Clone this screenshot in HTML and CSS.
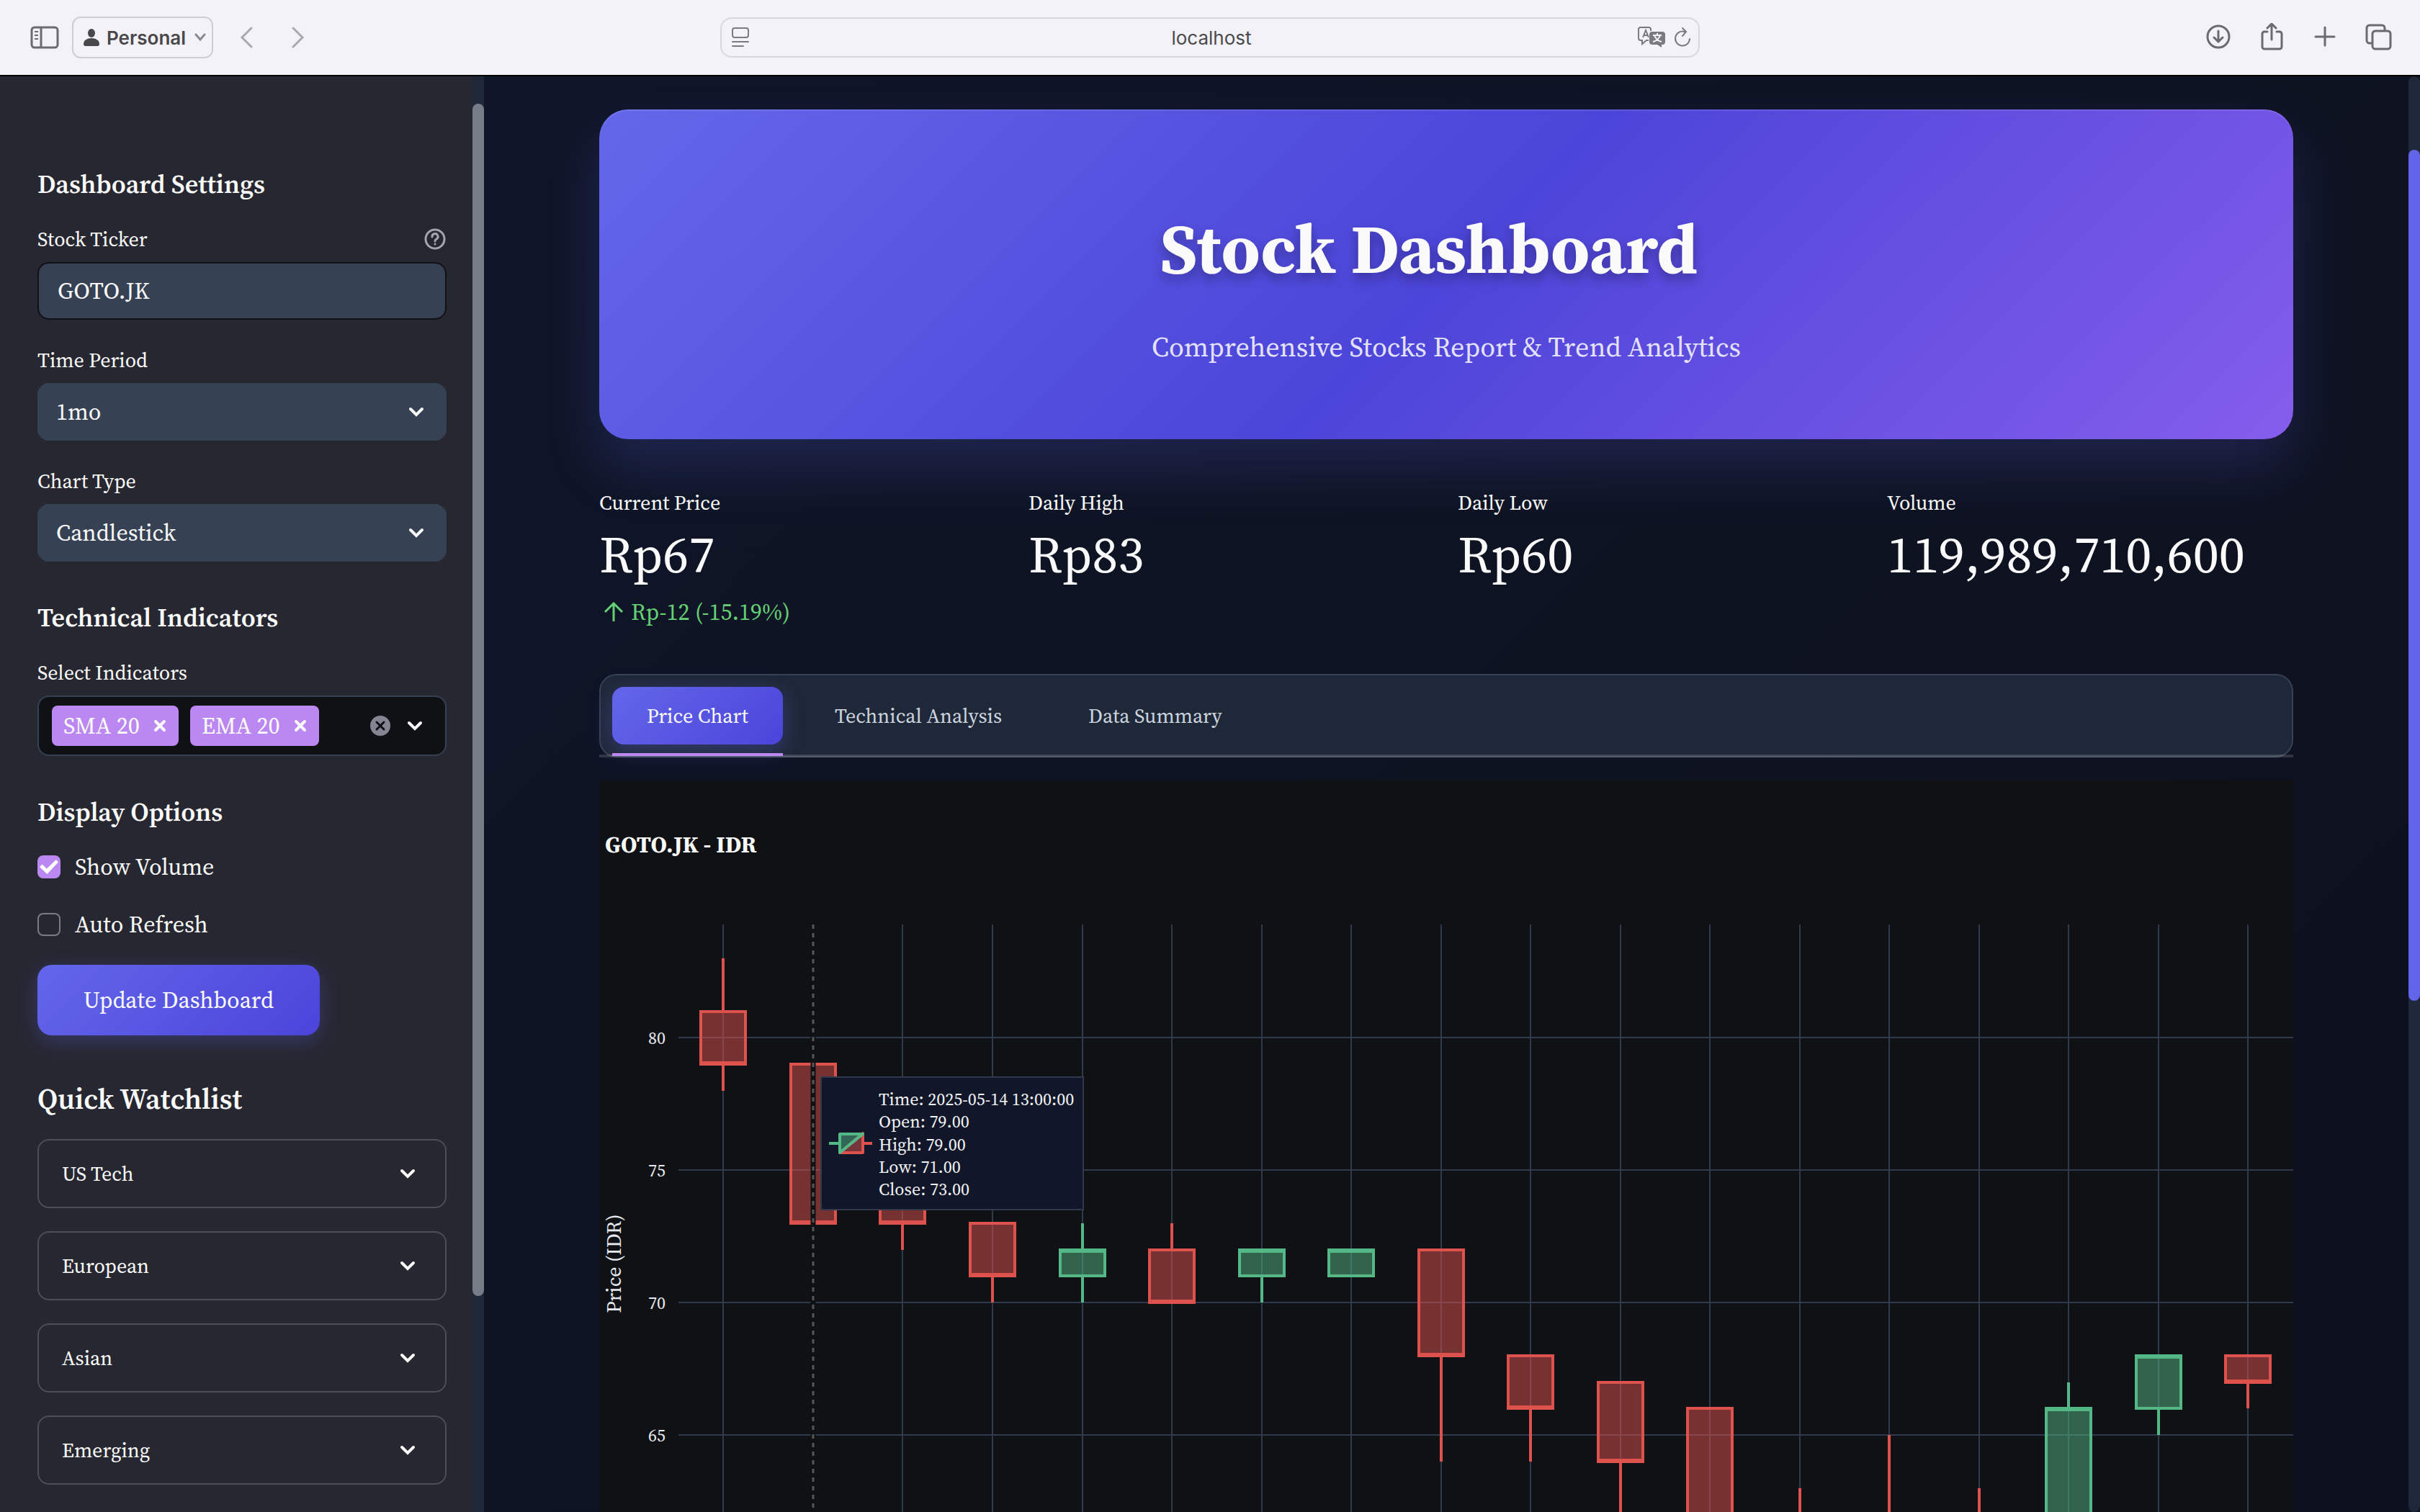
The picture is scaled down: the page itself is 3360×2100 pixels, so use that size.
FILE: index.html
```html
<!DOCTYPE html>
<html lang="en">
<head>
<meta charset="utf-8">
<title>Stock Dashboard</title>
<link rel="stylesheet" href="styles.css">
</head>
<body>
<svg class="defs" aria-hidden="true">
  <symbol id="chevron" viewBox="0 0 24 24"><path d="M4 8l8 8 8-8" fill="none" stroke="currentColor" stroke-width="4" stroke-linecap="round"/></symbol>
  <symbol id="cross" viewBox="0 0 24 24"><path d="M6 6l12 12M18 6L6 18" fill="none" stroke="currentColor" stroke-width="4" stroke-linecap="round"/></symbol>
</svg>
<div class="app">
  <header class="toolbar">
    <div class="toolbar-left">
      <button class="icon-button" aria-label="Show sidebar">
        <svg width="40" height="32" viewBox="0 0 40 32" fill="none" stroke="currentColor" stroke-width="3"><rect x="2" y="2" width="36" height="28" rx="4"/><path d="M15 2v28"/><path d="M6 8h5M6 13h5M6 18h5" stroke-width="2"/></svg>
      </button>
      <button class="profile">
        <svg width="22" height="24" viewBox="0 0 22 24" fill="currentColor"><ellipse cx="11" cy="6" rx="5" ry="6"/><path d="M0 21c0-5 5-8 11-8s11 3 11 8c0 2-1 3-3 3H3c-2 0-3-1-3-3z"/></svg>
        <span>Personal</span>
        <svg class="profile-arrow" width="16" height="12" viewBox="0 0 16 12" fill="none" stroke="currentColor" stroke-width="3" stroke-linecap="round"><path d="M2 2l6 7 6-7"/></svg>
      </button>
      <nav class="history">
        <button class="icon-button" aria-label="Back"><svg width="20" height="32" viewBox="0 0 20 32" fill="none" stroke="currentColor" stroke-width="3" stroke-linecap="round"><path d="M17 3L4 16l13 13"/></svg></button>
        <button class="icon-button" aria-label="Forward"><svg width="20" height="32" viewBox="0 0 20 32" fill="none" stroke="currentColor" stroke-width="3" stroke-linecap="round"><path d="M3 3l13 13L3 29"/></svg></button>
      </nav>
    </div>
    <div class="address">
      <button class="icon-button" aria-label="Page menu"><svg width="24" height="28" viewBox="0 0 24 28" fill="none" stroke="currentColor" stroke-width="2" stroke-linecap="round"><rect x="1" y="1" width="22" height="13" rx="3"/><path d="M1 20h22M1 26h15"/></svg></button>
      <input class="address-input" type="text" value="localhost" aria-label="Address">
      <button class="icon-button" aria-label="Translate">
        <svg width="38" height="30" viewBox="0 0 38 30"><path d="M18 6V4a3 3 0 0 0-3-3H4a3 3 0 0 0-3 3v12a3 3 0 0 0 3 3h2v5l6-5h3" fill="none" stroke="currentColor" stroke-width="2"/><path d="M7 15l4-10 4 10M8 12h6" fill="none" stroke="currentColor" stroke-width="2"/><path d="M20 7h14a4 4 0 0 1 4 4v10a4 4 0 0 1-4 4h-1v4l-6-4h-7a4 4 0 0 1-4-4V11a4 4 0 0 1 4-4z" fill="currentColor"/><path d="M21 12h12M27 9v3M31 12c-1 4-5 8-10 9M23 12c1 4 5 8 10 9" fill="none" stroke="#f3f2f8" stroke-width="2"/></svg>
      </button>
      <button class="icon-button" aria-label="Reload"><svg width="24" height="30" viewBox="0 0 24 30" fill="none" stroke="currentColor" stroke-width="2" stroke-linecap="round"><path d="M22 17A10 10 0 1 1 15 7M12 2l5 5-5 6"/></svg></button>
    </div>
    <div class="toolbar-right">
      <button class="icon-button" aria-label="Downloads"><svg width="40" height="40" viewBox="0 0 40 40" fill="none" stroke="currentColor" stroke-width="3" stroke-linecap="round"><circle cx="20" cy="19" r="15"/><path d="M20 11v15M14 20l6 6 6-6"/></svg></button>
      <button class="icon-button" aria-label="Share"><svg width="40" height="40" viewBox="0 0 40 40" fill="none" stroke="currentColor" stroke-width="3" stroke-linecap="round"><path d="M14 12h-4a3 3 0 0 0-3 3v18a3 3 0 0 0 3 3h21a3 3 0 0 0 3-3V15a3 3 0 0 0-3-3h-4M20 23V2M14 7l6-6 6 6"/></svg></button>
      <button class="icon-button" aria-label="New tab"><svg width="40" height="40" viewBox="0 0 40 40" fill="none" stroke="currentColor" stroke-width="3" stroke-linecap="round"><path d="M20 6v25M7 19h26"/></svg></button>
      <button class="icon-button" aria-label="Tab overview"><svg width="40" height="40" viewBox="0 0 40 40" fill="none" stroke="currentColor" stroke-width="3"><rect x="12" y="11" width="25" height="25" rx="4"/><path d="M12 28H8a4 4 0 0 1-4-4V7a4 4 0 0 1 4-4h17a4 4 0 0 1 4 4v4"/></svg></button>
    </div>
  </header>

  <div class="workspace">
    <aside class="sidebar">
      <div class="sidebar-content">
        <h2 class="section-title">Dashboard Settings</h2>
        <div class="field">
          <div class="label-row">
            <label for="ticker">Stock Ticker</label>
            <svg class="help" width="32" height="32" viewBox="0 0 32 32" fill="none" stroke="currentColor" stroke-width="3" stroke-linecap="round"><circle cx="16" cy="16" r="13"/><path d="M12 13a4 4 0 1 1 6 3c-1 1-2 1-2 3M16 23v0"/></svg>
          </div>
          <input class="control ticker" id="ticker" type="text" value="GOTO.JK">
        </div>
        <div class="field">
          <label for="period">Time Period</label>
          <div class="select-wrap">
            <select class="control" id="period"><option>1mo</option></select>
            <svg class="chevron" width="24" height="24"><use href="#chevron"/></svg>
          </div>
        </div>
        <div class="field">
          <label for="chart-type">Chart Type</label>
          <div class="select-wrap">
            <select class="control" id="chart-type"><option>Candlestick</option></select>
            <svg class="chevron" width="24" height="24"><use href="#chevron"/></svg>
          </div>
        </div>

        <h2 class="section-title spaced">Technical Indicators</h2>
        <div class="field">
          <span class="label" id="indicators-label">Select Indicators</span>
          <div class="multiselect" role="group" aria-labelledby="indicators-label">
            <button class="tag">SMA 20 <svg width="24" height="24"><use href="#cross"/></svg></button>
            <button class="tag">EMA 20 <svg width="24" height="24"><use href="#cross"/></svg></button>
            <button class="icon-button clear" aria-label="Clear all"><svg width="28" height="28" viewBox="0 0 28 28"><circle cx="14" cy="14" r="14" fill="#838494"/><path d="M9 9l10 10M19 9L9 19" stroke="#101115" stroke-width="3" stroke-linecap="round"/></svg></button>
            <button class="icon-button" aria-label="Open list"><svg width="24" height="24"><use href="#chevron"/></svg></button>
          </div>
        </div>

        <h2 class="section-title spaced">Display Options</h2>
        <div class="checks">
          <label class="check"><input type="checkbox" checked>Show Volume</label>
          <label class="check"><input type="checkbox">Auto Refresh</label>
        </div>
        <button class="update">Update Dashboard</button>

        <h2 class="section-title watch-title">Quick Watchlist</h2>
        <div class="watchlist">
          <details><summary>US Tech <svg width="24" height="24"><use href="#chevron"/></svg></summary></details>
          <details><summary>European <svg width="24" height="24"><use href="#chevron"/></svg></summary></details>
          <details><summary>Asian <svg width="24" height="24"><use href="#chevron"/></svg></summary></details>
          <details><summary>Emerging <svg width="24" height="24"><use href="#chevron"/></svg></summary></details>
        </div>
      </div>
      <div class="scrollbar side-scroll"><span class="thumb"></span></div>
    </aside>

    <main class="main">
      <div class="content">
        <section class="hero">
          <h1>Stock Dashboard</h1>
          <p>Comprehensive Stocks Report &amp; Trend Analytics</p>
        </section>

        <section class="metrics">
          <div class="metric">
            <div class="metric-label">Current Price</div>
            <div class="metric-value">Rp67</div>
            <div class="metric-delta"><svg width="28" height="28" viewBox="0 0 28 28" fill="none" stroke="currentColor" stroke-width="3"><path d="M14 27V3M2 14L14 2l12 12"/></svg>Rp-12 (-15.19%)</div>
          </div>
          <div class="metric"><div class="metric-label">Daily High</div><div class="metric-value">Rp83</div></div>
          <div class="metric"><div class="metric-label">Daily Low</div><div class="metric-value">Rp60</div></div>
          <div class="metric"><div class="metric-label">Volume</div><div class="metric-value">119,989,710,600</div></div>
        </section>

        <div class="tabs" role="tablist">
          <button class="tab active" role="tab" aria-selected="true">Price Chart</button>
          <button class="tab" role="tab">Technical Analysis</button>
          <button class="tab" role="tab">Data Summary</button>
        </div>

        <svg class="chart" viewBox="0 0 2352 1016" role="img" aria-label="GOTO.JK candlestick chart">
          <text class="chart-title" x="8" y="100">GOTO.JK - IDR</text>
          <path class="grid" d="M110 357H2352M110 541H2352M110 725H2352M110 909H2352M172 200V1016M421 200V1016M546 200V1016M671 200V1016M795 200V1016M920 200V1016M1044 200V1016M1169 200V1016M1293 200V1016M1418 200V1016M1542 200V1016M1667 200V1016M1791 200V1016M1916 200V1016M2040 200V1016M2165 200V1016M2289 200V1016"/>
          <g class="axis">
            <text x="92" y="366">80</text>
            <text x="92" y="550">75</text>
            <text x="92" y="734">70</text>
            <text x="92" y="918">65</text>
          </g>
          <text class="axis-title" transform="translate(30 671) rotate(-90)">Price (IDR)</text>
          <g class="down">
            <path d="M141 321h62v73h-62zM141 392h62M172 247v74M172 394v37"/>
            <path d="M266 394h62v221h-62zM266 613h62"/>
            <path d="M390 541h62v74h-62zM390 613h62M421 615v37"/>
            <path d="M515 615h62v73h-62zM515 686h62M546 688v37"/>
            <path d="M764 652h62v73h-62zM764 723h62M795 615v37"/>
            <path d="M1138 652h62v147h-62zM1138 797h62M1169 799v147"/>
            <path d="M1262 799h62v73h-62zM1262 870h62M1293 872v74"/>
            <path d="M1387 836h62v110h-62zM1387 944h62M1418 946v90"/>
            <path d="M1511 872h62v221h-62z"/>
            <path d="M1667 983v60"/>
            <path d="M1791 909v120"/>
            <path d="M1916 983v60"/>
            <path d="M2258 799h62v37h-62zM2258 834h62M2289 836v36"/>
          </g>
          <g class="up">
            <path d="M640 652h62v36h-62zM640 654h62M671 615v37M671 688v37"/>
            <path d="M889 652h62v36h-62zM889 654h62M920 688v37"/>
            <path d="M1013 652h62v36h-62zM1013 654h62"/>
            <path d="M2009 872h62v221h-62zM2009 874h62M2040 836v36"/>
            <path d="M2134 799h62v73h-62zM2134 801h62M2165 872v37"/>
          </g>
          <path class="spike-gap" d="M297 200V1016"/>
          <path class="spike" d="M297 200V1016"/>
          <g class="tooltip">
            <rect x="308" y="412" width="364" height="184"/>
            <g class="legend-mark">
              <path class="mark-down" d="M334 517h32v-27zM366 504h13"/>
              <path class="mark-up" d="M334 517v-26h32zM319 504h15"/>
            </g>
            <text x="388" y="451">Time: 2025-05-14 13:00:00</text>
            <text x="388" y="482">Open: 79.00</text>
            <text x="388" y="514">High: 79.00</text>
            <text x="388" y="545">Low: 71.00</text>
            <text x="388" y="576">Close: 73.00</text>
          </g>
        </svg>
      </div>
      <div class="scrollbar main-scroll"><span class="thumb"></span></div>
    </main>
  </div>
</div>
</body>
</html>
```
FILE: styles.css
```css
* { box-sizing: border-box; }

body {
  margin: 0;
  background: #0e1117;
  color: #fafafa;
  font-family: "Source Serif 4", "Source Serif Pro", "Liberation Serif", serif;
}

button, input, select { font: inherit; color: inherit; }
button { border: 0; background: none; padding: 0; }
svg { display: block; flex: none; }
h1, h2, p { margin: 0; }
.defs { position: absolute; width: 0; height: 0; }

.app { display: flex; flex-direction: column; height: 100vh; overflow: hidden; }

/* Browser toolbar */
.toolbar {
  display: grid;
  grid-template-columns: 1fr 40.5% 1fr;
  align-items: center;
  flex: none;
  height: 106px;
  border-bottom: 2px solid #000;
  background: #f3f2f8;
  color: #6b6a70;
  font-family: Inter, sans-serif;
}
.icon-button { display: flex; align-items: center; justify-content: center; }
.toolbar-left { display: flex; align-items: center; gap: 18px; padding-left: 42px; }
.profile {
  display: flex;
  align-items: center;
  gap: 10px;
  height: 58px;
  padding: 0 8px 0 14px;
  border: 2px solid #cfced3;
  border-radius: 12px;
  color: #48484b;
  font-size: 26px;
  font-weight: 600;
}
.profile-arrow { margin-left: 2px; color: #8a8990; }
.history { display: flex; gap: 52px; margin-left: 18px; color: #a9a8ae; }
.address {
  display: flex;
  align-items: center;
  gap: 12px;
  height: 56px;
  padding: 0 10px 0 14px;
  border: 2px solid #d8d7dc;
  border-radius: 16px;
  color: #7b7a80;
}
.address-input {
  flex: 1;
  min-width: 0;
  padding: 0 0 0 50px;
  border: 0;
  background: none;
  color: #4a4a4d;
  font-size: 26px;
  text-align: center;
}
.toolbar-right { display: flex; justify-content: flex-end; gap: 34px; padding-right: 38px; }

/* Page */
.workspace { display: flex; flex: 1; min-height: 0; }
.scrollbar { display: flex; flex-direction: column; flex: none; width: 16px; background: #1f2838; }
.thumb { border-radius: 8px; }
.side-scroll::before { content: ""; flex: 38; }
.side-scroll .thumb { flex: 1656; background: #777d86; }
.side-scroll::after { content: ""; flex: 300; }
.main-scroll { border-radius: 8px; }
.main-scroll::before { content: ""; flex: 102; }
.main-scroll .thumb { flex: 1182; background: #6265ea; }
.main-scroll::after { content: ""; flex: 710; }

/* Sidebar */
.sidebar { display: flex; flex: none; width: 20%; background: #262730; }
.sidebar-content { flex: 1; min-width: 0; padding: 126px 36px 38px 52px; overflow: hidden; }
.section-title { margin-bottom: 34px; font-size: 36px; line-height: 48px; font-weight: 600; }
.section-title.spaced { margin-top: 54px; }
.field + .field { margin-top: 38px; }
.field label, .label { display: block; font-size: 28px; line-height: 36px; }
.field .label-row { display: flex; align-items: center; justify-content: space-between; }
.help { color: #a5a6ab; }
.control, .multiselect {
  display: block;
  width: 100%;
  height: 80px;
  margin-top: 14px;
  padding: 0 24px;
  border: 2px solid #364153;
  border-radius: 16px;
  background: #364153;
  font-size: 32px;
}
.ticker { padding: 0 26px; border-color: #101115; }
.select-wrap { position: relative; }
select.control { appearance: none; }
.chevron { position: absolute; right: 30px; top: 28px; pointer-events: none; }
.multiselect {
  display: flex;
  align-items: center;
  gap: 16px;
  height: 84px;
  padding: 0 30px 0 18px;
  background: #101115;
}
.tag {
  display: flex;
  align-items: center;
  gap: 16px;
  height: 56px;
  padding: 0 14px 0 16px;
  border-radius: 8px;
  background: #bb87f0;
}
.clear { margin-left: auto; margin-right: 6px; }
.checks { display: grid; gap: 36px; margin-top: -4px; margin-bottom: 34px; }
.check { display: flex; align-items: center; gap: 20px; font-size: 32px; line-height: 44px; }
.check input {
  appearance: none;
  display: grid;
  place-items: center;
  width: 32px;
  height: 32px;
  margin: 0;
  border: 2px solid #7b7c82;
  border-radius: 8px;
}
.check input:checked { border-color: #bb87f0; background: #bb87f0; }
.check input:checked::before {
  content: "";
  width: 26px;
  height: 20px;
  background: #fff;
  clip-path: polygon(0 50%, 14% 32%, 38% 62%, 88% 0, 100% 18%, 40% 100%);
}
.update {
  width: 392px;
  max-width: 100%;
  height: 98px;
  border-radius: 20px;
  background: linear-gradient(135deg, #6366ea, #4c44da);
  box-shadow: 0 8px 30px rgba(99, 102, 241, 0.3);
  font-size: 32px;
}
.watch-title { margin: 64px 0 32px; font-size: 40px; }
.watchlist { display: grid; gap: 32px; }
.watchlist details { border: 2px solid #4d4e56; border-radius: 16px; }
.watchlist summary {
  display: flex;
  align-items: center;
  justify-content: space-between;
  height: 92px;
  padding: 0 40px 0 32px;
  font-size: 28px;
  list-style: none;
}

/* Main column */
.main {
  display: flex;
  flex: 1;
  min-width: 0;
  background: linear-gradient(135deg, #0f1628, #0e1322 50%, #0d101e);
}
.content { flex: 1; min-width: 0; padding: 46px 160px 0; overflow: hidden; }
.hero {
  padding: 134px 48px 104px;
  border-radius: 40px;
  background: linear-gradient(135deg, #6467ea, #4c45d9 50%, #855dec);
  box-shadow: 0 40px 80px rgba(99, 102, 241, 0.2), inset 0 2px 0 rgba(255, 255, 255, 0.1);
  text-align: center;
}
.hero h1 {
  padding-right: 48px;
  font-size: 96px;
  line-height: 120px;
  text-shadow: 0 8px 16px rgba(0, 0, 0, 0.3);
}
.hero p { margin-top: 52px; color: #e3e1fb; font-size: 38px; line-height: 48px; }
.metrics { display: grid; grid-template-columns: repeat(4, 1fr); gap: 32px; margin-top: 70px; }
.metric-label { font-size: 28px; line-height: 36px; }
.metric-value { margin-top: 10px; font-size: 72px; line-height: 88px; }
.metric-delta {
  display: flex;
  align-items: center;
  gap: 10px;
  margin-top: 16px;
  padding-left: 6px;
  color: #66cf74;
  font-size: 32px;
  line-height: 40px;
}
.tabs {
  position: relative;
  display: flex;
  gap: 24px;
  margin-top: 66px;
  padding: 16px;
  border: 2px solid #364153;
  border-radius: 24px;
  background: #1f2838;
}
.tabs::after {
  content: "";
  position: absolute;
  left: -2px;
  right: -2px;
  bottom: -2px;
  height: 4px;
  background: rgba(250, 250, 250, 0.15);
}
.tab { position: relative; height: 80px; padding: 0 48px; border-radius: 16px; color: #cbd3df; font-size: 28px; }
.tab.active {
  background: linear-gradient(135deg, #6366ea, #4c44da);
  box-shadow: 0 8px 30px rgba(99, 102, 241, 0.3);
  color: #fafafa;
}
.tab.active::after {
  content: "";
  position: absolute;
  z-index: 1;
  left: 0;
  right: 0;
  bottom: -16px;
  height: 4px;
  background: #bb87f0;
}

/* Chart */
.chart { width: 100%; height: auto; margin-top: 32px; background: #101115; fill: #fafafa; }
.chart-title { font-size: 32px; font-weight: 700; }
.grid { stroke: #2f3b4d; stroke-width: 2; }
.axis { font-size: 24px; text-anchor: end; fill: #e6e9ee; }
.axis-title { font-size: 28px; text-anchor: middle; fill: #e6e9ee; }
.up path, .down path { stroke-width: 4; fill-opacity: 0.5; }
.up { fill: #54b786; stroke: #54b786; }
.down { fill: #dd524c; stroke: #dd524c; }
.spike-gap { stroke: #101115; stroke-width: 7; }
.spike { stroke: #55565a; stroke-width: 3; stroke-dasharray: 6 6; }
.tooltip rect { fill: #111628; stroke: #2f3b4d; stroke-width: 2; }
.tooltip text { font-size: 24px; fill: #f0f2f6; }
.legend-mark path { stroke-width: 4; fill-opacity: 0.5; stroke-linejoin: round; }
.mark-up { fill: #54b786; stroke: #54b786; }
.mark-down { fill: #dd524c; stroke: #dd524c; }
```
